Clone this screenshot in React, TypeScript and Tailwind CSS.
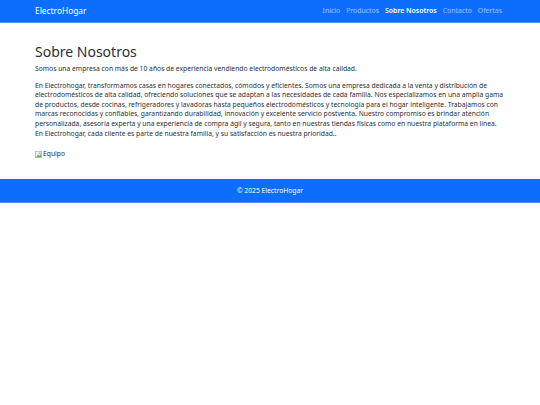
import React from 'react';

const links = ['Inicio', 'Productos', 'Sobre Nosotros', 'Contacto', 'Ofertas'];

const App = () => {
	return (
		<div className="min-h-[405px] bg-white font-['Noto_Sans',sans-serif] text-[#2b2f33]">
			<nav className="h-[23px] bg-[#0d6efd] border-b border-[#4d94ff]">
				<div className="mx-[35px] flex h-full items-center justify-between">
					<span className="text-[8.4px] text-white">ElectroHogar</span>
					<ul className="flex gap-[6px] text-[6.9px] mr-[3px]">
						{links.map((l) => (
							<li
								key={l}
								className={
									l === 'Sobre Nosotros'
										? 'text-white font-semibold'
										: 'text-white/55'
								}
							>
								{l}
							</li>
						))}
					</ul>
				</div>
			</nav>

			<main className="mx-[35px] pt-[20px] pb-[20px]">
				<h1 className="text-[14px] leading-[18px] mb-[3px]">Sobre Nosotros</h1>
				<p className="text-[6.75px] leading-[9.6px] mb-[7px]">
					Somos una empresa con más de 10 años de experiencia vendiendo electrodomésticos de alta calidad.
				</p>
				<p className="text-[6.75px] leading-[9.6px] mb-[11px]">
					En Electrohogar, transformamos casas en hogares conectados, cómodos y eficientes. Somos una
					empresa dedicada a la venta y distribución de electrodomésticos de alta calidad, ofreciendo
					soluciones que se adaptan a las necesidades de cada familia. Nos especializamos en una amplia
					gama de productos, desde cocinas, refrigeradores y lavadoras hasta pequeños electrodomésticos y
					tecnología para el hogar inteligente. Trabajamos con marcas reconocidas y confiables,
					garantizando durabilidad, innovación y excelente servicio postventa. Nuestro compromiso es
					brindar atención personalizada, asesoría experta y una experiencia de compra ágil y segura,
					tanto en nuestras tiendas físicas como en nuestra plataforma en línea. En Electrohogar, cada
					cliente es parte de nuestra familia, y su satisfacción es nuestra prioridad..
				</p>
				<div className="flex items-center text-[6.75px] leading-[10px]">
					<svg width="7" height="7" viewBox="0 0 8 8" className="mr-[1px]">
						<rect x="0.5" y="0.5" width="7" height="7" fill="#f2f2f2" stroke="#bbb" />
						<path d="M1 7 L3.5 4 L5 5.5 L7 3 V7 Z" fill="#6bb35b" />
						<circle cx="5.5" cy="2.5" r="1" fill="#8ab4f8" />
					</svg>
					<span>Equipo</span>
				</div>
			</main>

			<footer className="h-[24px] bg-[#0d6efd] border-b border-[#4d94ff] flex items-center justify-center">
				<span className="text-[6.75px] text-white">© 2025 ElectroHogar</span>
			</footer>
		</div>
	);
};

export default App;
